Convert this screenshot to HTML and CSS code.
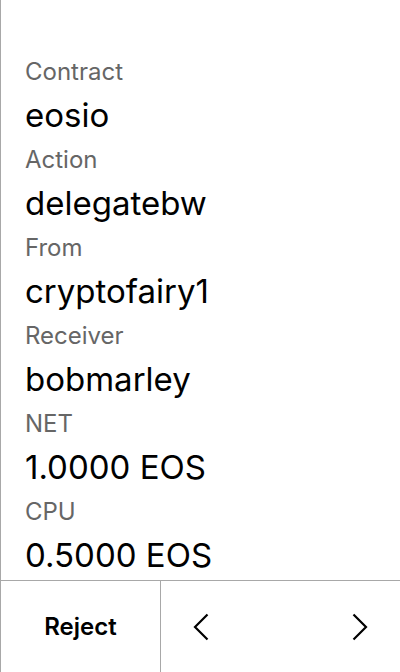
FILE: index.html
```html
<!DOCTYPE html>
<html>
<head>
<meta charset="utf-8">
<link rel="stylesheet" href="styles.css">
</head>
<body>
<div class="screen">
  <div class="fields">
    <div class="label">Contract</div>
    <div class="value">eosio</div>
    <div class="label">Action</div>
    <div class="value">delegatebw</div>
    <div class="label">From</div>
    <div class="value">cryptofairy1</div>
    <div class="label">Receiver</div>
    <div class="value">bobmarley</div>
    <div class="label">NET</div>
    <div class="value">1.0000 EOS</div>
    <div class="label">CPU</div>
    <div class="value">0.5000 EOS</div>
  </div>
  <div class="footer">
    <div class="reject">Reject</div>
    <div class="nav">
      <svg class="chev" width="18" height="28" viewBox="0 0 18 28"><path d="M15.5 1.5 L3 14 L15.5 26.5" fill="none" stroke="#000" stroke-width="2.2"/></svg>
      <svg class="chev" width="18" height="28" viewBox="0 0 18 28"><path d="M2.5 1.5 L15 14 L2.5 26.5" fill="none" stroke="#000" stroke-width="2.2"/></svg>
    </div>
  </div>
</div>
</body>
</html>
```
FILE: styles.css
```css
html, body {
  margin: 0;
  padding: 0;
  background: #fff;
}
.screen {
  width: 400px;
  height: 672px;
  box-sizing: border-box;
  border-left: 1px solid #a8a8a8;
  display: flex;
  flex-direction: column;
  font-family: Inter, "Noto Sans", sans-serif;
}
.fields {
  flex: 1;
  padding: 52px 0 0 24px;
}
.label {
  font-size: 24px;
  line-height: 40px;
  color: #666;
}
.value {
  font-size: 33px;
  line-height: 46px;
  padding-bottom: 2px;
  color: #000;
}
.footer {
  height: 92px;
  border-top: 1px solid #a8a8a8;
  display: flex;
}
.reject {
  width: 159px;
  border-right: 1px solid #a8a8a8;
  display: flex;
  align-items: center;
  justify-content: center;
  font-size: 24px;
  font-weight: 600;
  color: #000;
}
.nav {
  flex: 1;
  display: flex;
  align-items: center;
  justify-content: space-between;
  padding: 0 31px;
}
```
